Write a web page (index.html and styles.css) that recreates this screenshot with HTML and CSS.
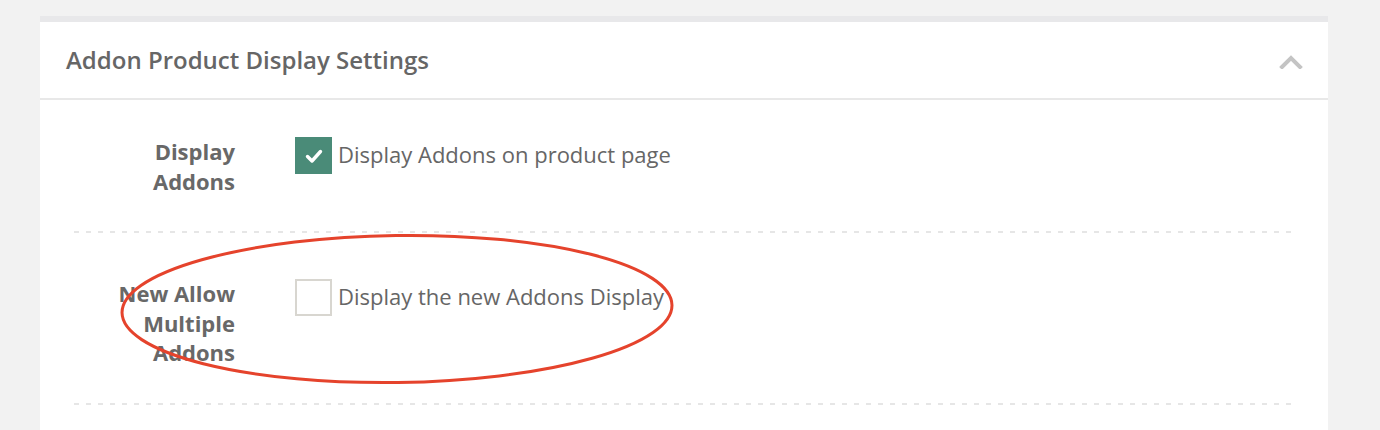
FILE: index.html
```html
<!DOCTYPE html>
<html lang="en">
<head>
<meta charset="utf-8">
<title>Addon Product Display Settings</title>
<link rel="stylesheet" href="styles.css">
</head>
<body>
<section class="panel">
  <header class="panel-head">
    <h2 class="panel-title">Addon Product Display Settings</h2>
    <svg class="chevron" width="24" height="14" viewBox="0 0 24 14" aria-hidden="true">
      <polyline points="3,12 12,3 21,12" fill="none" stroke="#c4c4c4" stroke-width="4" stroke-linecap="square"/>
    </svg>
  </header>
  <div class="panel-body">
    <div class="row row-first">
      <div class="row-label">Display Addons</div>
      <label class="option">
        <span class="box box-checked">
          <svg width="20" height="20" viewBox="0 0 20 20" aria-hidden="true">
            <polyline points="3.5,10.5 8,15 16.5,5.5" fill="none" stroke="#fff" stroke-width="3.4" stroke-linecap="round" stroke-linejoin="round"/>
          </svg>
        </span>
        <span class="option-text">Display Addons on product page</span>
      </label>
    </div>
    <div class="row">
      <div class="row-label">New Allow Multiple Addons</div>
      <label class="option">
        <span class="box"></span>
        <span class="option-text">Display the new Addons Display</span>
      </label>
    </div>
  </div>
  <svg class="annotation" width="580" height="170" viewBox="0 0 580 170" aria-hidden="true">
    <ellipse cx="290" cy="85" rx="275" ry="73.5" fill="none" stroke="#e5432c" stroke-width="3" transform="rotate(-0.8 290 85)"/>
  </svg>
</section>
</body>
</html>
```

FILE: styles.css
```css
* { box-sizing: border-box; }

body {
  margin: 0;
  background: #f2f2f2;
  font-family: "Open Sans", "Liberation Sans", sans-serif;
  color: #666;
}

.panel {
  position: relative;
  margin: 16px 0 0 40px;
  width: 1288px;
  min-height: 460px;
  background: #fff;
  border-top: 6px solid #e8e8ea;
}

.panel-head {
  height: 78px;
  display: flex;
  align-items: center;
  justify-content: space-between;
  padding: 0 25px 2px 26px;
  border-bottom: 2px solid #e8e8e8;
}

.panel-title {
  margin: 0;
  font-size: 24px;
  font-weight: 600;
  color: #666;
}

.chevron { display: block; margin-top: 6px; }

.panel-body {
  padding: 0 34px;
}

.row {
  display: grid;
  grid-template-columns: 161px 1fr;
  column-gap: 60px;
  align-items: start;
  padding: 46px 0 37px;
  background-image: repeating-linear-gradient(to right, #e6e6e6 0 5px, transparent 5px 12px);
  background-size: 100% 2px;
  background-position: left bottom;
  background-repeat: no-repeat;
}

.row-first { padding-top: 37px; }

.row-label {
  padding-left: 30px;
  text-align: right;
  font-size: 22px;
  line-height: 29.5px;
  font-weight: 700;
  color: #686868;
}

.option {
  display: flex;
  align-items: flex-start;
  gap: 6px;
}

.box {
  width: 37px;
  height: 37px;
  flex: none;
  border: 2px solid #d8d6d0;
  background: #fff;
  display: flex;
  align-items: center;
  justify-content: center;
}

.box-checked {
  background: #4a8b78;
  border-color: #4a8b78;
}

.option-text {
  margin-top: 2px;
  font-size: 22px;
  line-height: 30px;
  color: #666;
}

.annotation {
  position: absolute;
  left: 67px;
  top: 202px;
}
```
